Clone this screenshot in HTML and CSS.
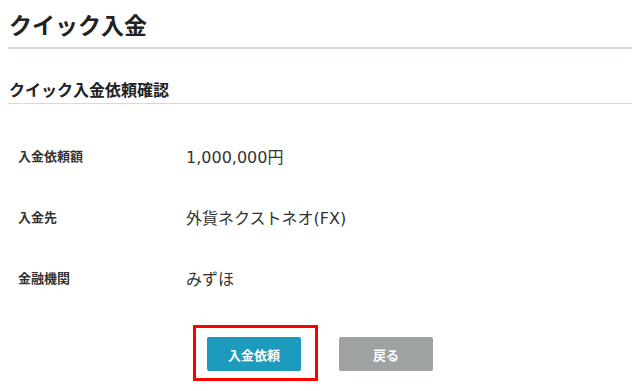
FILE: index.html
```html
<!DOCTYPE html>
<html lang="ja">
<head>
<meta charset="utf-8">
<title>クイック入金</title>
<link rel="stylesheet" href="styles.css">
</head>
<body>
<div class="page">
  <h1 class="title">クイック入金</h1>
  <h2 class="subtitle">クイック入金依頼確認</h2>
  <div class="rows">
    <div class="row"><div class="label">入金依頼額</div><div class="value">1,000,000円</div></div>
    <div class="row"><div class="label">入金先</div><div class="value">外貨ネクストネオ(FX)</div></div>
    <div class="row"><div class="label">金融機関</div><div class="value">みずほ</div></div>
  </div>
  <div class="actions">
    <button class="btn btn-primary">入金依頼<span class="highlight"></span></button>
    <button class="btn btn-back">戻る</button>
  </div>
</div>
</body>
</html>
```
FILE: styles.css
```css
html, body {
  margin: 0;
  padding: 0;
  background: #ffffff;
}
body {
  font-family: "Noto Sans CJK JP", "Noto Sans", sans-serif;
  color: #333333;
}
.page {
  padding: 0 8px 20px;
}
.title {
  margin: 0;
  padding: 8px 0 7px 1px;
  font-size: 23px;
  line-height: 32px;
  font-weight: bold;
  color: #222222;
  border-bottom: 2px solid #d3dadd;
}
.subtitle {
  margin: 28px 0 0;
  padding: 0 0 2px 1px;
  font-size: 16px;
  line-height: 24px;
  font-weight: bold;
  color: #222222;
  border-bottom: 1px solid #d3dadd;
}
.rows {
  margin-top: 21px;
}
.row {
  display: flex;
  align-items: center;
  height: 61px;
}
.label {
  width: 168px;
  padding-left: 10px;
  font-size: 13px;
  font-weight: bold;
  color: #333333;
}
.value {
  font-family: "DejaVu Sans", "Noto Sans CJK JP", sans-serif;
  font-size: 16px;
  color: #333333;
}
.actions {
  display: flex;
  justify-content: center;
  gap: 38px;
  margin-top: 29px;
}
.btn {
  position: relative;
  width: 94px;
  height: 34px;
  border: none;
  border-radius: 2px;
  font-family: "Noto Sans CJK JP", sans-serif;
  font-size: 13px;
  font-weight: bold;
  color: #ffffff;
  padding: 0;
}
.btn-primary {
  background: #1d9bbd;
}
.btn-back {
  background: #9ea2a2;
}
.highlight {
  position: absolute;
  top: -12px;
  left: -14px;
  right: -17px;
  bottom: -10px;
  border: 3px solid #ff0000;
}
```
